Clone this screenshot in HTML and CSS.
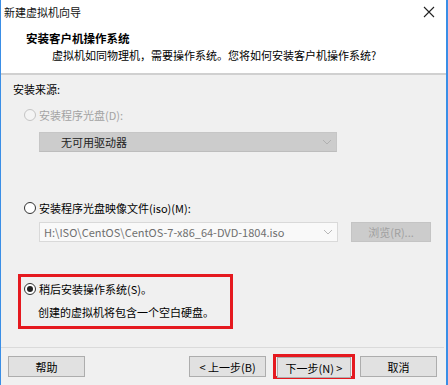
FILE: index.html
```html
<!DOCTYPE html>
<html>
<head>
<meta charset="utf-8">
<link rel="stylesheet" href="styles.css">
</head>
<body>
<div class="window">
  <div class="titlebar">
    <span class="title">新建虚拟机向导</span>
    <span class="close">
      <svg width="12" height="12" viewBox="0 0 12 12"><path d="M1 1 L11 11 M11 1 L1 11" stroke="#222" stroke-width="1.1" fill="none"/></svg>
    </span>
  </div>
  <div class="header">
    <div class="heading">安装客户机操作系统</div>
    <div class="subheading">虚拟机如同物理机，需要操作系统。您将如何安装客户机操作系统?</div>
  </div>
  <div class="content">
    <div class="section-label">安装来源:</div>
    <div class="radio-row disabled first">
      <span class="radio"></span><span>安装程序光盘(D):</span>
    </div>
    <div class="select disabled-select">
      <span class="select-text">无可用驱动器</span>
      <svg class="chev" width="10" height="6" viewBox="0 0 10 6"><path d="M1 1 L5 5 L9 1" stroke="#b0b0b0" stroke-width="1" fill="none"/></svg>
    </div>
    <div class="radio-row second">
      <span class="radio"></span><span>安装程序光盘映像文件(iso)(M):</span>
    </div>
    <div class="iso-row">
      <div class="combo">
        <span class="combo-text">H:\ISO\CentOS\CentOS-7-x86_64-DVD-1804.iso</span>
        <svg class="chev" width="10" height="6" viewBox="0 0 10 6"><path d="M1 1 L5 5 L9 1" stroke="#b8b8b8" stroke-width="1" fill="none"/></svg>
      </div>
      <div class="browse">浏览(R)...</div>
    </div>
    <div class="highlight">
      <div class="radio-row checked-row">
        <span class="radio checked"></span><span>稍后安装操作系统(S)。</span>
      </div>
      <div class="note">创建的虚拟机将包含一个空白硬盘。</div>
    </div>
  </div>
  <div class="footer">
    <div class="btn">帮助</div>
    <div class="spacer"></div>
    <div class="btn">&lt; 上一步(B)</div>
    <div class="next-wrap"><div class="btn">下一步(N) &gt;</div></div>
    <div class="btn">取消</div>
  </div>
</div>
</body>
</html>
```
FILE: styles.css
```css
* { box-sizing: border-box; }
html, body { margin: 0; padding: 0; }
body {
  width: 448px;
  height: 385px;
  overflow: hidden;
  font-family: "Noto Sans CJK SC", "Noto Sans", sans-serif;
  font-size: 11px;
  color: #000;
  background: #f0f0f0;
}
.window {
  width: 448px;
  height: 385px;
  border-left: 1px solid #3a8ee6;
  border-right: 2px solid #3a8ee6;
  background: #f0f0f0;
  display: flex;
  flex-direction: column;
}
.titlebar {
  height: 24px;
  background: #fff;
  display: flex;
  align-items: center;
  justify-content: space-between;
  padding: 0 11px 0 3px;
}
.title { color: #111; line-height: 16px; }
.close { display: flex; align-items: center; }
.header {
  background: #fff;
  height: 51px;
  border-bottom: 2px solid #d0d0d0;
  padding-top: 6px;
}
.heading {
  font-weight: bold;
  padding-left: 25px;
  line-height: 16px;
  font-size: 11.5px;
}
.subheading {
  padding-left: 51px;
  line-height: 16px;
  margin-top: 1px;
}
.content {
  padding: 6px 0 0 12px;
  height: 272px;
}
.section-label { line-height: 16px; }
.radio-row {
  display: flex;
  align-items: center;
  line-height: 16px;
  padding-left: 11px;
  gap: 3px;
}
.radio-row.first { margin-top: 10px; }
.radio-row.second { margin-top: 48px; }
.radio {
  width: 12px;
  height: 12px;
  border-radius: 50%;
  border: 1px solid #333;
  background: #fff;
  position: relative;
  flex: none;
}
.disabled { color: #a3a3a3; }
.disabled .radio { border-color: #c4c4c4; background: #f4f4f4; }
.radio.checked::after {
  content: "";
  position: absolute;
  left: 2px;
  top: 2px;
  width: 6px;
  height: 6px;
  border-radius: 50%;
  background: #222;
}
.select {
  margin: 9px 0 0 26px;
  width: 298px;
  height: 20px;
  display: flex;
  align-items: center;
  justify-content: space-between;
  padding: 0 4px 0 21px;
}
.disabled-select {
  background: #cccccc;
  border: 1px solid #c6c6c6;
  border-bottom-color: #bdbdbd;
  color: #222;
}
.iso-row {
  display: flex;
  margin: 6px 0 0 26px;
  gap: 13px;
  align-items: center;
}
.combo {
  width: 299px;
  height: 20px;
  border: 1px solid #d9d9d9;
  background: #f9f9f9;
  display: flex;
  align-items: center;
  justify-content: space-between;
  padding: 0 4px 0 4px;
  color: #6f6f6f;
}
.browse {
  width: 80px;
  height: 20px;
  background: #cccccc;
  border: 1px solid #c4c4c4;
  color: #a0a0a0;
  display: flex;
  align-items: center;
  justify-content: center;
}
.highlight {
  margin: 32px 0 0 5px;
  width: 215px;
  height: 55px;
  border: 3px solid #e5191f;
  padding-top: 4px;
}
.highlight .radio-row { padding-left: 3px; }
.note {
  margin-top: 7px;
  padding-left: 17px;
  line-height: 16px;
}
.footer {
  border-top: 1px solid #dadada;
  margin-right: 2px;
  flex: 1;
  display: flex;
  align-items: flex-start;
  padding: 8px 7px 0 7px;
  gap: 0;
}
.spacer { flex: 1; }
.btn {
  width: 77px;
  height: 21px;
  background: #e1e1e1;
  border: 1px solid #adadad;
  display: flex;
  align-items: center;
  justify-content: center;
  line-height: 16px;
}
.next-wrap {
  border: 3px solid #e5191f;
  padding: 0 1px;
  margin: -2px 5px 0 7px;
  height: 25px;
}
.next-wrap .btn { width: 74px; }
```
